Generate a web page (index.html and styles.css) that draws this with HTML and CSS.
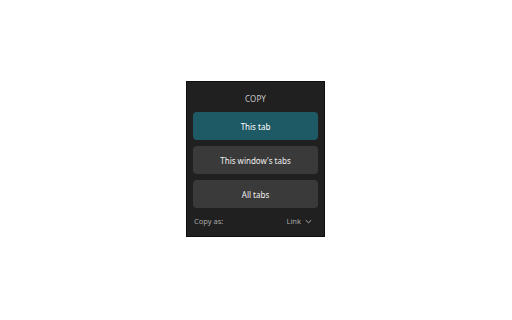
FILE: index.html
```html
<!DOCTYPE html>
<html>
<head>
<meta charset="utf-8">
<link rel="stylesheet" href="styles.css">
</head>
<body>
<div class="stage">
  <div class="panel">
    <div class="title">COPY</div>
    <div class="buttons">
      <div class="btn primary">This tab</div>
      <div class="btn">This window's tabs</div>
      <div class="btn">All tabs</div>
    </div>
    <div class="footer">
      <span class="label">Copy as:</span>
      <span class="select">Link
        <svg class="chev" width="7" height="5" viewBox="0 0 7 5"><path d="M0.8 1.2 L3.5 3.8 L6.2 1.2" fill="none" stroke="#bdbdbd" stroke-width="0.9"/></svg>
      </span>
    </div>
  </div>
</div>
</body>
</html>
```
FILE: styles.css
```css
html, body {
  margin: 0;
  padding: 0;
  background: #ffffff;
}
body {
  width: 512px;
  height: 320px;
  font-family: "Noto Sans", "Open Sans", sans-serif;
}
.stage {
  padding: 81px 0 0 186px;
}
.panel {
  box-sizing: border-box;
  width: 139px;
  height: 156px;
  background: #202020;
  border: 1px solid #0e0e0e;
  padding: 0 6px;
  display: flex;
  flex-direction: column;
}
.title {
  height: 30px;
  line-height: 33px;
  text-align: center;
  font-size: 8px;
  color: #c8c8c8;
  letter-spacing: 0.1px;
}
.buttons {
  display: flex;
  flex-direction: column;
  gap: 6px;
}
.btn {
  height: 28px;
  border-radius: 4px;
  background: #3a3a3a;
  color: #f0f0f0;
  font-size: 8px;
  display: flex;
  align-items: center;
  justify-content: center;
}
.btn.primary {
  background: #1e5966;
  color: #ffffff;
}
.footer {
  display: flex;
  justify-content: space-between;
  align-items: center;
  height: 26px;
  padding: 0 6px 0 1px;
  font-size: 7.5px;
  color: #a8a8a8;
}
.select {
  display: flex;
  align-items: center;
  gap: 4px;
}
.chev {
  display: block;
}
```
